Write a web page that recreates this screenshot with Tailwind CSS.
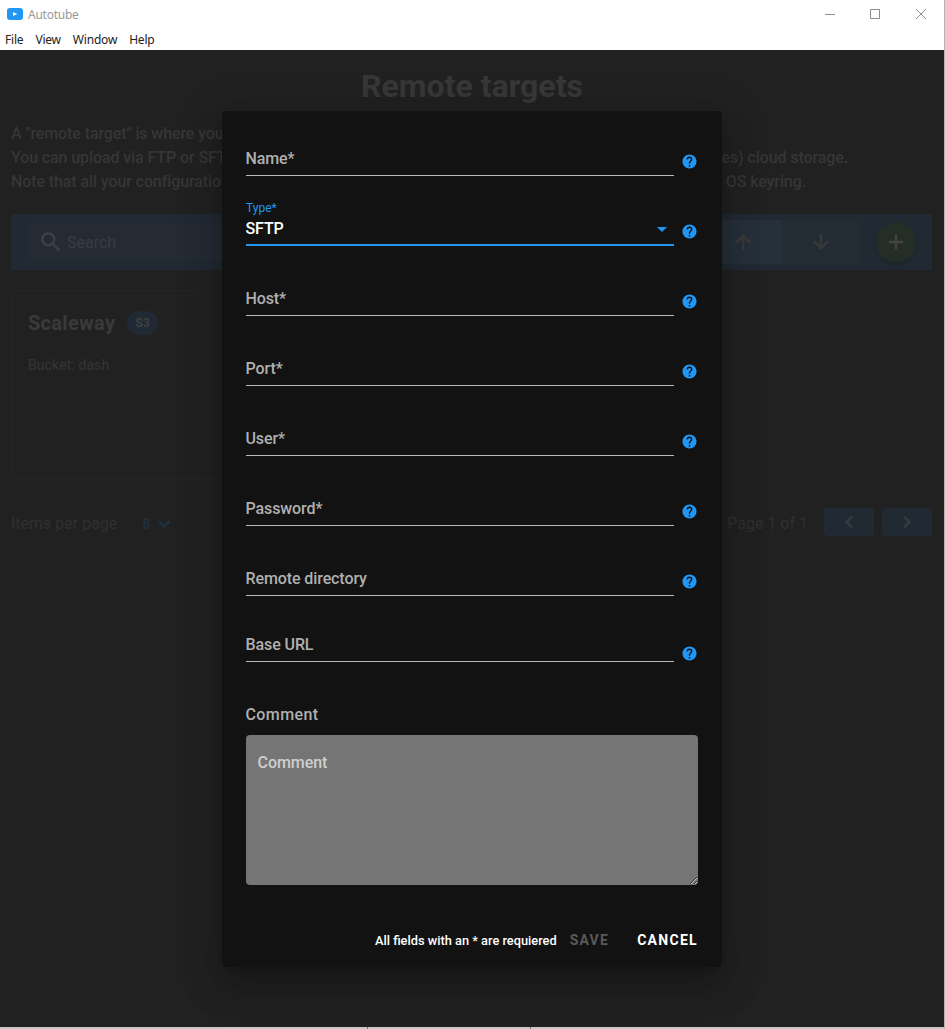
<!DOCTYPE html>
<html lang="en">
<head>
<meta charset="utf-8">
<title>Autotube</title>
<script src="https://cdn.jsdelivr.net/npm/@tailwindcss/browser@4"></script>
</head>
<body class="w-[945px] h-[1029px] overflow-hidden bg-white font-['Roboto',sans-serif]">
<svg class="hidden">
  <symbol id="help" viewBox="0 0 24 24"><path fill="currentColor" d="M15.07 11.25l-.9.92C13.45 12.89 13 13.5 13 15h-2v-.5c0-1.11.45-2.11 1.17-2.83l1.24-1.26c.37-.36.59-.86.59-1.41a2 2 0 0 0-2-2 2 2 0 0 0-2 2H8a4 4 0 0 1 4-4 4 4 0 0 1 4 4c0 .88-.36 1.67-.93 2.25M13 19h-2v-2h2M12 2A10 10 0 0 0 2 12a10 10 0 0 0 10 10 10 10 0 0 0 10-10C22 6.47 17.5 2 12 2z"/></symbol>
</svg>
<div class="flex h-full">
  <div class="w-[944px] flex flex-col">
    <header class="h-[30px] flex items-center justify-between pl-[7px] pr-[17px] font-['Noto_Sans',sans-serif]">
      <div class="flex items-center gap-[5px] text-[12px] text-[#999999] h-[30px] tracking-[-0.25px]">
        <svg class="w-4 h-3 mb-[2px]" viewBox="0 0 16 12"><rect width="16" height="12" rx="3" fill="#2196f3"/><path d="M6 4l4.200 2L6 8z" fill="#fff"/></svg>
        <span>Autotube</span>
      </div>
      <svg class="w-[102px] h-3 mb-[2px]" viewBox="0 0 102 12" fill="none" stroke="#8c8c8c"><path d="M0 6.500h10M45.500 1.500h9v9h-9zM91 1l10 10M101 1L91 11"/></svg>
    </header>
    <nav class="h-5 flex gap-[12px] pl-[5px] text-[12px] leading-5 text-[#222] font-['Noto_Sans',sans-serif] tracking-[-0.2px]">
      <span>File</span><span>View</span><span>Window</span><span>Help</span>
    </nav>
    <div class="relative h-[977px] overflow-hidden bg-[#212121] px-[11px]">
      <h1 class="pt-4 h-[72px] text-center text-[32px] leading-[40px] font-bold text-[#373737]">Remote targets</h1>
      <div class="text-[16px] leading-6 font-medium text-[#363636] whitespace-nowrap tracking-[-0.1px]">
        <p>A "remote target" is where your videos are stored.</p>
        <p class="flex justify-between w-[837px]"><span>You can upload via FTP or SFTP</span><span>(and other compatible services) cloud storage.</span></p>
        <p class="flex justify-between w-[795px]"><span>Note that all your configuration</span><span>is stored in your OS keyring.</span></p>
      </div>
      <div class="mt-5 w-[921px] h-14 bg-[#212933] flex items-center pl-4">
        <div class="w-[440px] h-[38px] rounded bg-[#242b33] flex items-center pl-[11px] gap-[2px] text-[16px] text-[#383d43]">
          <svg class="w-[26px] h-[26px]" viewBox="0 0 24 24" fill="#3e4043" stroke="#3e4043" stroke-width=".3"><path d="M9.500 3A6.500 6.500 0 0 1 16 9.500c0 1.610-.59 3.090-1.560 4.230l.27.27h.79l5 5-1.500 1.500-5-5v-.79l-.27-.27A6.516 6.516 0 0 1 9.500 16 6.500 6.500 0 0 1 3 9.500 6.500 6.500 0 0 1 9.500 3m0 2C7 5 5 7 5 9.500S7 14 9.500 14 14 12 14 9.500 12 5 9.500 5z"/></svg>
          <span class="pt-[2px] pl-px">Search</span>
        </div>
        <div class="ml-auto flex h-11 items-center">
          <div class="w-[78px] h-11 bg-[#26303a] flex items-center justify-center"><svg class="w-6 h-6" viewBox="0 0 24 24" fill="#3a3a3a" stroke="#3a3a3a" stroke-width=".5"><path d="M13 20h-2V8l-5.500 5.500-1.420-1.420L12 4.160l7.920 7.920-1.420 1.420L13 8v12z"/></svg></div>
          <div class="w-[78px] h-11 bg-[#222c32] rounded-r flex items-center justify-center"><svg class="w-6 h-6" viewBox="0 0 24 24" fill="#393939" stroke="#393939" stroke-width=".5"><path d="M11 4h2v12l5.500-5.500 1.420 1.420L12 19.840l-7.920-7.920L5.500 10.500 11 16V4z"/></svg></div>
          <div class="ml-4 mr-4 w-10 h-10 rounded-full bg-[#252e26] shadow-md flex items-center justify-center"><svg class="w-6 h-6" viewBox="0 0 24 24" fill="#424442" stroke="#424442" stroke-width=".4"><path d="M19 13h-6v6h-2v-6H5v-2h6V5h2v6h6v2z"/></svg></div>
        </div>
      </div>
      <div class="mt-5 w-[298px] h-[190px] rounded border border-[#252525] pl-4 pt-5">
        <div class="flex items-center gap-[12px] h-6">
          <span class="text-[20px] font-bold text-[#3a3a3a] tracking-[0.3px]">Scaleway</span>
          <span class="w-[31px] h-6 rounded-full bg-[#212a34] text-[#3e4042] text-[12px] font-bold leading-6 text-center">S3</span>
        </div>
        <p class="mt-5 text-[14px] leading-5 text-[#353535] tracking-[0.1px]">Bucket: dash</p>
      </div>
      <div class="mt-[28px] w-[921px] h-7 flex items-center text-[16px] text-[#303030]">
        <span class="pt-1">Items per page</span>
        <span class="ml-[25px] pt-1 text-[14px] font-bold text-[#202f3c]">8</span>
        <svg class="ml-1 mt-1 w-5 h-5" viewBox="0 0 24 24" fill="#202f3c"><path d="M7.410 8.580L12 13.170l4.590-4.590L19 11l-7 7-7-7z" transform="translate(-1 -2) scale(1.100)"/></svg>
        <span class="ml-auto pt-1">Page 1 of 1</span>
        <span class="ml-4 w-[50px] h-7 rounded bg-[#212933] flex items-center justify-center"><svg class="w-6 h-6" viewBox="0 0 24 24" fill="#36383b"><path d="M15.410 16.580L10.830 12l4.580-4.590L14 6l-6 6 6 6 1.410-1.420z" stroke="#36383b"/></svg></span>
        <span class="ml-2 w-[50px] h-7 rounded bg-[#212933] flex items-center justify-center"><svg class="w-6 h-6" viewBox="0 0 24 24" fill="#36383b"><path d="M8.590 16.580L13.170 12 8.590 7.410 10 6l6 6-6 6-1.410-1.420z" stroke="#36383b"/></svg></span>
      </div>

      <section class="absolute left-[222px] top-[61px] w-[500px] h-[856px] rounded bg-[#121212] px-6 text-[16px] font-medium tracking-[-0.1px] text-[#b0b0b0] shadow-[0_11px_15px_-7px_rgba(0,0,0,.2),0_24px_38px_3px_rgba(0,0,0,.14),0_9px_46px_8px_rgba(0,0,0,.12)]">
        <div class="h-[65px] flex items-end"><div class="w-[428px] h-[29px] border-b border-[#b8b8b8] leading-6 -indent-[0.5px]">Name*</div><svg class="ml-[7px] mb-[6px] w-[17px] h-[17px] text-[#2196f3]"><use href="#help"/></svg></div>
        <div class="h-[70px] flex items-end">
          <div class="w-[428px] border-b-2 border-[#2196f3]">
            <div class="text-[12px] leading-[14px] text-[#2196f3] font-normal tracking-normal">Type*</div>
            <div class="flex justify-between items-center h-[29px] pb-[1px] leading-6 text-white -indent-[0.5px]"><span>SFTP</span><svg class="mr-[7px] mt-[1px] w-[10px] h-[5px]" viewBox="0 0 10 5"><path d="M0 0h10L5 5z" fill="#2196f3"/></svg></div>
          </div>
          <svg class="ml-[7px] mb-[6px] w-[17px] h-[17px] text-[#2196f3]"><use href="#help"/></svg>
        </div>
        <div class="h-[70px] flex items-end"><div class="w-[428px] h-[29px] border-b border-[#b8b8b8] leading-6 -indent-[0.5px]">Host*</div><svg class="ml-[7px] mb-[6px] w-[17px] h-[17px] text-[#2196f3]"><use href="#help"/></svg></div>
        <div class="h-[70px] flex items-end"><div class="w-[428px] h-[29px] border-b border-[#b8b8b8] leading-6 -indent-[0.5px]">Port*</div><svg class="ml-[7px] mb-[6px] w-[17px] h-[17px] text-[#2196f3]"><use href="#help"/></svg></div>
        <div class="h-[70px] flex items-end"><div class="w-[428px] h-[29px] border-b border-[#b8b8b8] leading-6 -indent-[0.5px]">User*</div><svg class="ml-[7px] mb-[6px] w-[17px] h-[17px] text-[#2196f3]"><use href="#help"/></svg></div>
        <div class="h-[70px] flex items-end"><div class="w-[428px] h-[29px] border-b border-[#b8b8b8] leading-6 -indent-[0.5px]">Password*</div><svg class="ml-[7px] mb-[6px] w-[17px] h-[17px] text-[#2196f3]"><use href="#help"/></svg></div>
        <div class="h-[70px] flex items-end"><div class="w-[428px] h-[29px] border-b border-[#b8b8b8] leading-6 -indent-[0.5px]">Remote directory</div><svg class="ml-[7px] mb-[6px] w-[17px] h-[17px] text-[#2196f3]"><use href="#help"/></svg></div>
        <div class="h-[66px] flex items-end"><div class="w-[428px] h-[29px] border-b border-[#b8b8b8] leading-6 -indent-[0.5px]">Base URL</div><svg class="ml-[7px] w-[17px] h-[17px] text-[#2196f3]"><use href="#help"/></svg></div>
        <label class="block mt-[41px] leading-6 tracking-[0.4px] -indent-[0.5px]">Comment</label>
        <textarea class="block mt-2 w-[452px] h-[150px] rounded bg-[#757575] pl-[11.5px] pt-4 leading-6 tracking-[-0.05px] placeholder:text-[#cfcfcf] placeholder:opacity-100 resize" placeholder="Comment"></textarea>
        <div class="mt-[37px] h-9 flex items-center justify-end text-white">
          <span class="text-[12.8px] pt-px tracking-normal">All fields with an * are requiered</span>
          <span class="ml-[13px] text-[14px] font-bold tracking-[1.25px] text-[#595959]">SAVE</span>
          <span class="ml-[28px] text-[14px] font-bold tracking-[1.3px]">CANCEL</span>
        </div>
      </section>
    </div>
    <div class="h-[2px] bg-[#c8c8c8] flex"><div class="ml-[367px] w-[164px] border-x border-[#777]"></div></div>
  </div>
  <div class="w-px h-full bg-[#b4b4b4]"></div>
</div>
</body>
</html>
